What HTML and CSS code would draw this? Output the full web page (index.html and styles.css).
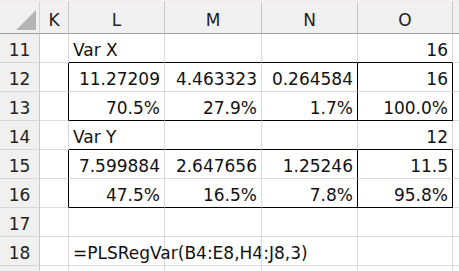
FILE: index.html
```html
<!DOCTYPE html>
<html>
<head>
<meta charset="utf-8">
<link rel="stylesheet" href="styles.css">
</head>
<body>
<div class="strip"></div>
<div class="sheet">
  <div class="corner"><span class="tri"></span></div>
  <div class="ch">K</div>
  <div class="ch">L</div>
  <div class="ch">M</div>
  <div class="ch">N</div>
  <div class="ch">O</div>
  <div class="ch last"></div>

  <div class="rh">11</div>
  <div class="c"></div>
  <div class="c bb">Var X</div>
  <div class="c bb"></div>
  <div class="c bb"></div>
  <div class="c bb r">16</div>
  <div class="c"></div>

  <div class="rh">12</div>
  <div class="c br"></div>
  <div class="c r">11.27209</div>
  <div class="c r">4.463323</div>
  <div class="c r br">0.264584</div>
  <div class="c r br">16</div>
  <div class="c"></div>

  <div class="rh">13</div>
  <div class="c br"></div>
  <div class="c r bb">70.5%</div>
  <div class="c r bb">27.9%</div>
  <div class="c r bb br">1.7%</div>
  <div class="c r bb br">100.0%</div>
  <div class="c"></div>

  <div class="rh">14</div>
  <div class="c"></div>
  <div class="c bb">Var Y</div>
  <div class="c bb"></div>
  <div class="c bb"></div>
  <div class="c bb r">12</div>
  <div class="c"></div>

  <div class="rh">15</div>
  <div class="c br"></div>
  <div class="c r">7.599884</div>
  <div class="c r">2.647656</div>
  <div class="c r br">1.25246</div>
  <div class="c r br">11.5</div>
  <div class="c"></div>

  <div class="rh">16</div>
  <div class="c br"></div>
  <div class="c r bb">47.5%</div>
  <div class="c r bb">16.5%</div>
  <div class="c r bb br">7.8%</div>
  <div class="c r bb br">95.8%</div>
  <div class="c"></div>

  <div class="rh">17</div>
  <div class="c"></div>
  <div class="c"></div>
  <div class="c"></div>
  <div class="c"></div>
  <div class="c"></div>
  <div class="c"></div>

  <div class="rh">18</div>
  <div class="c"></div>
  <div class="c formula">=PLSRegVar(B4:E8,H4:J8,3)</div>
  <div class="c"></div>
  <div class="c"></div>
  <div class="c"></div>
  <div class="c"></div>

  <div class="rh end"></div>
  <div class="c end"></div>
  <div class="c end"></div>
  <div class="c end"></div>
  <div class="c end"></div>
  <div class="c end"></div>
  <div class="c end"></div>
</div>
</body>
</html>
```

FILE: styles.css
```css
html, body {
  margin: 0;
  padding: 0;
  background: #ffffff;
  overflow: hidden;
}

body {
  width: 459px;
  height: 271px;
  font-family: "DejaVu Sans", sans-serif;
  font-size: 17px;
  color: #111111;
}

.strip {
  height: 2px;
  background: #f3eded;
}

.sheet {
  display: grid;
  grid-template-columns: 40px 29px 96px 97px 96px 95px 1fr;
  grid-template-rows: 32px repeat(8, 29px) 5px;
}

.sheet > div {
  box-sizing: border-box;
  line-height: 20px;
  white-space: nowrap;
  overflow: visible;
}

.corner {
  background: #f0f0f0;
  border-right: 1px solid #d2d2d2;
  border-bottom: 1px solid #9f9f9f;
  position: relative;
}

.tri {
  position: absolute;
  left: 16px;
  top: 8px;
  width: 0;
  height: 0;
  border-left: 20px solid transparent;
  border-bottom: 20px solid #b4b4b4;
}

.ch {
  background: #f0f0f0;
  border-right: 1px solid #c4c4c4;
  border-bottom: 1px solid #9f9f9f;
  display: flex;
  align-items: flex-end;
  justify-content: center;
  padding-bottom: 3px;
  color: #222222;
}

.ch.last {
  border-right: none;
}

.rh {
  background: #f0f0f0;
  border-right: 1px solid #c8c8c8;
  border-bottom: 1px solid #d6d6d6;
  display: flex;
  align-items: flex-end;
  justify-content: center;
  padding-bottom: 2px;
  color: #222222;
}

.c {
  border-right: 1px solid #dadada;
  border-bottom: 1px solid #dadada;
  display: flex;
  align-items: flex-end;
  padding: 0 4px 2px 4px;
}

.c.r {
  justify-content: flex-end;
}

.c.bb {
  border-bottom-color: #000000;
}

.c.br {
  border-right-color: #000000;
}

.sheet > .end {
  border-bottom: none;
}

.formula {
  overflow: visible;
}
```
